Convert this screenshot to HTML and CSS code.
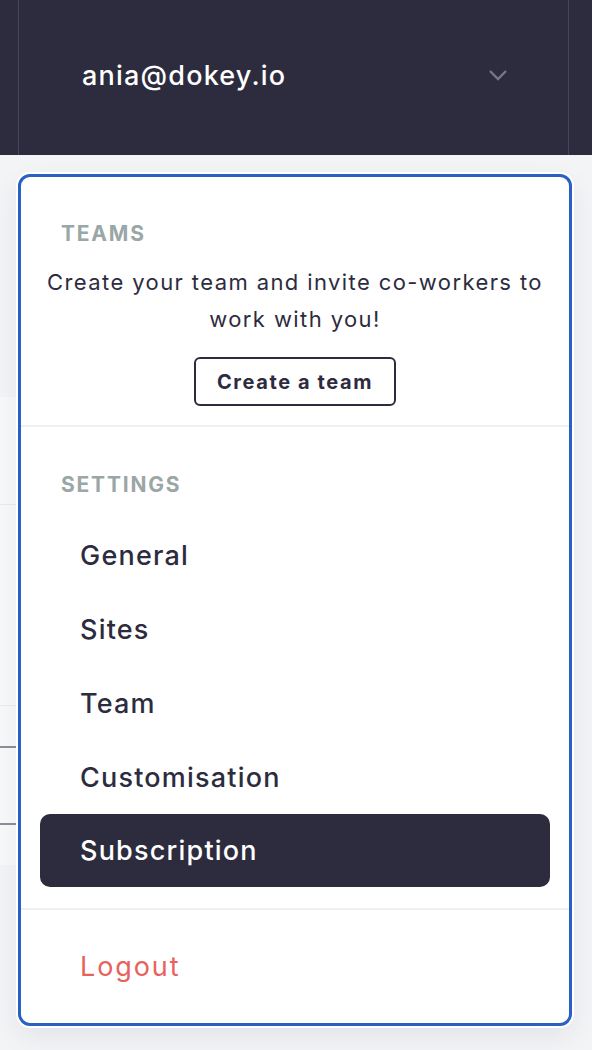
FILE: index.html
```html
<!DOCTYPE html>
<html>
<head>
<meta charset="utf-8">
<link rel="stylesheet" href="styles.css">
</head>
<body>
<header class="topbar">
  <div class="account">
    <span class="email">ania@dokey.io</span>
    <svg class="chevron" width="20" height="12" viewBox="0 0 20 12"><path d="M2 2 L10 10 L18 2" fill="none" stroke="#77768a" stroke-width="2.4"/></svg>
  </div>
</header>
<main class="page">
  <div class="table">
    <div class="row r1"></div>
    <div class="row r2"></div>
    <div class="row r3"></div>
    <div class="row r4"></div>
    <div class="row r5"></div>
  </div>
</main>

<div class="dropdown">
  <section class="teams">
    <h3 class="label">TEAMS</h3>
    <p class="desc">Create your team and invite co-workers to work with you!</p>
    <button class="create">Create a team</button>
  </section>
  <section class="settings">
    <h3 class="label">SETTINGS</h3>
    <ul class="menu">
      <li>General</li>
      <li>Sites</li>
      <li>Team</li>
      <li>Customisation</li>
      <li class="active">Subscription</li>
    </ul>
  </section>
  <section class="logout">
    <span>Logout</span>
  </section>
</div>
</body>
</html>
```
FILE: styles.css
```css
* { box-sizing: border-box; }
html, body { margin: 0; padding: 0; }
body {
  width: 592px;
  height: 1050px;
  background: #f3f4f6;
  font-family: Inter, "Noto Sans", sans-serif;
  position: relative;
  overflow: hidden;
}
.topbar {
  height: 155px;
  background: #2d2c3e;
  padding: 0 23px 0 18px;
}
.account {
  height: 155px;
  border-left: 1px solid #45445a;
  border-right: 1px solid #45445a;
  display: flex;
  align-items: center;
  justify-content: space-between;
  padding: 0 60px 0 63px;
}
.email {
  color: #ffffff;
  font-size: 27px;
  font-weight: 500;
  letter-spacing: 1.2px;
  margin-top: -4px;
}
.chevron { margin-top: -6px; }

.page { padding-top: 242px; }
.table {
  width: 560px;
  background: #f8f9fa;
}
.row { border-bottom: 1px solid #ececee; }
.r1 { height: 108px; }
.r2 { height: 201px; }
.r3 { height: 42px; border-bottom: 2px solid #8e8e99; }
.r4 { height: 77px; border-bottom: 2px solid #8e8e99; }
.r5 { height: 40px; border-bottom: none; }

.dropdown {
  position: absolute;
  left: 18px;
  top: 174px;
  width: 554px;
  height: 852px;
  background: #fff;
  border: 3px solid #2a5fc6;
  border-radius: 12px;
  box-shadow: 0 0 0 2px #fff, 0 10px 28px rgba(40, 44, 60, 0.08);
  display: flex;
  flex-direction: column;
}
.label {
  margin: 0;
  font-size: 21px;
  font-weight: 700;
  color: #9ba6a6;
  letter-spacing: 1.8px;
  padding-left: 40px;
}
.teams {
  padding: 44px 0 19px;
  border-bottom: 2px solid #efefef;
  display: flex;
  flex-direction: column;
  align-items: stretch;
}
.desc {
  margin: 18px 0 19px;
  text-align: center;
  font-size: 22px;
  letter-spacing: 1.4px;
  line-height: 37px;
  color: #2d2c3e;
  padding: 0 16px;
}
.create {
  align-self: center;
  font-family: inherit;
  font-size: 20px;
  font-weight: 700;
  letter-spacing: 1.6px;
  color: #2d2c3e;
  background: #fff;
  border: 2px solid #2d2c3e;
  border-radius: 6px;
  width: 202px;
  height: 49px;
  padding: 0;
  cursor: pointer;
}
.settings {
  padding: 45px 19px 21px;
  border-bottom: 2px solid #efefef;
}
.settings .label { padding-left: 21px; }
.menu {
  list-style: none;
  margin: 21px 0 0;
  padding: 0;
}
.menu li {
  height: 74px;
  display: flex;
  align-items: center;
  padding-left: 40px;
  font-size: 27px;
  font-weight: 500;
  letter-spacing: 1.2px;
  color: #2d2c3e;
  border-radius: 10px;
}
.menu li.active {
  background: #2d2c3e;
  color: #fff;
  height: 73px;
}
.logout {
  padding: 40px 0 0 59px;
  font-size: 27px;
  letter-spacing: 1.9px;
  color: #e8625d;
}
```
